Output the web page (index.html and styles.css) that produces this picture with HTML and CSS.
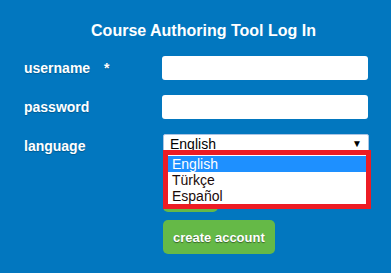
FILE: index.html
```html
<!DOCTYPE html>
<html lang="en">
<head>
    <meta charset="UTF-8">
    <meta name="viewport" content="width=device-width, initial-scale=1.0">
    <title>Course Authoring Tool Log In</title>
    <link rel="stylesheet" href="styles.css">
</head>
<body>
    <div class="container">
        <h1>Course Authoring Tool Log In</h1>
        <form class="login-form">
            <label class="label" for="username">username <span class="required">*</span></label>
            <input class="field" type="text" id="username" name="username">

            <label class="label" for="password">password</label>
            <input class="field" type="password" id="password" name="password">

            <span class="label">language</span>
            <div class="select-wrap">
                <div class="select">
                    <span>English</span>
                    <span class="arrow">&#9660;</span>
                </div>
                <ul class="dropdown">
                    <li class="option selected">English</li>
                    <li class="option">Türkçe</li>
                    <li class="option">Español</li>
                </ul>
            </div>

            <div class="buttons">
                <button type="submit" class="btn">log in</button>
                <button type="button" class="btn">create account</button>
            </div>
        </form>
    </div>
</body>
</html>
```
FILE: styles.css
```css
:root {
    --background-color: #0277bf;
    --button-color: #65b947;
    --highlight-color: #1e90ff;
    --outline-color: #ed1c24;
}

* {
    box-sizing: border-box;
    margin: 0;
    padding: 0;
}

body {
    font-family: 'Liberation Sans', Arial, sans-serif;
    background-color: var(--background-color);
    color: #ffffff;
    min-height: 100vh;
}

.container {
    padding-top: 21px;
}

h1 {
    font-size: 16px;
    line-height: 20px;
    font-weight: 700;
    text-align: center;
    padding-left: 16px;
    margin-bottom: 15px;
}

.login-form {
    display: grid;
    grid-template-columns: 138px 206px;
    row-gap: 15px;
    padding-left: 24px;
}

.label {
    font-size: 14px;
    font-weight: 700;
    line-height: 24px;
    text-shadow: 0 1px 1px rgba(0, 0, 0, 0.25);
}

.required {
    margin-left: 10px;
}

.field {
    height: 24px;
    border: none;
    border-radius: 3px;
    background-color: #ffffff;
    font-family: inherit;
    font-size: 14px;
    padding: 0 6px;
}

.select-wrap {
    position: relative;
    height: 24px;
    margin-left: 1px;
}

.select {
    display: flex;
    justify-content: space-between;
    align-items: center;
    height: 19px;
    width: 206px;
    padding: 0 6px 0 6px;
    background-color: #ffffff;
    border: 1px solid #a9c4e4;
    border-radius: 2px;
    color: #000000;
    font-size: 14px;
}

.arrow {
    font-size: 10px;
}

.dropdown {
    position: absolute;
    top: 16px;
    left: 0;
    width: 208px;
    list-style: none;
    background-color: #ffffff;
    border: 5px solid var(--outline-color);
    padding-top: 1px;
    z-index: 2;
}

.option {
    height: 16px;
    line-height: 16px;
    font-size: 14px;
    color: #1a0a0a;
    padding-left: 4px;
}

.option.selected {
    background-color: var(--highlight-color);
    color: #ffffff;
}

.buttons {
    grid-column: 2;
    display: flex;
    flex-direction: column;
    align-items: flex-start;
    gap: 8px;
    margin-top: 5px;
    margin-left: 1px;
}

.btn {
    height: 34px;
    padding: 0 10px;
    background-color: var(--button-color);
    color: #ffffff;
    border: none;
    border-radius: 5px;
    font-family: inherit;
    font-size: 13px;
    font-weight: 700;
    text-shadow: 0 1px 1px rgba(0, 0, 0, 0.45);
    cursor: pointer;
}
```
